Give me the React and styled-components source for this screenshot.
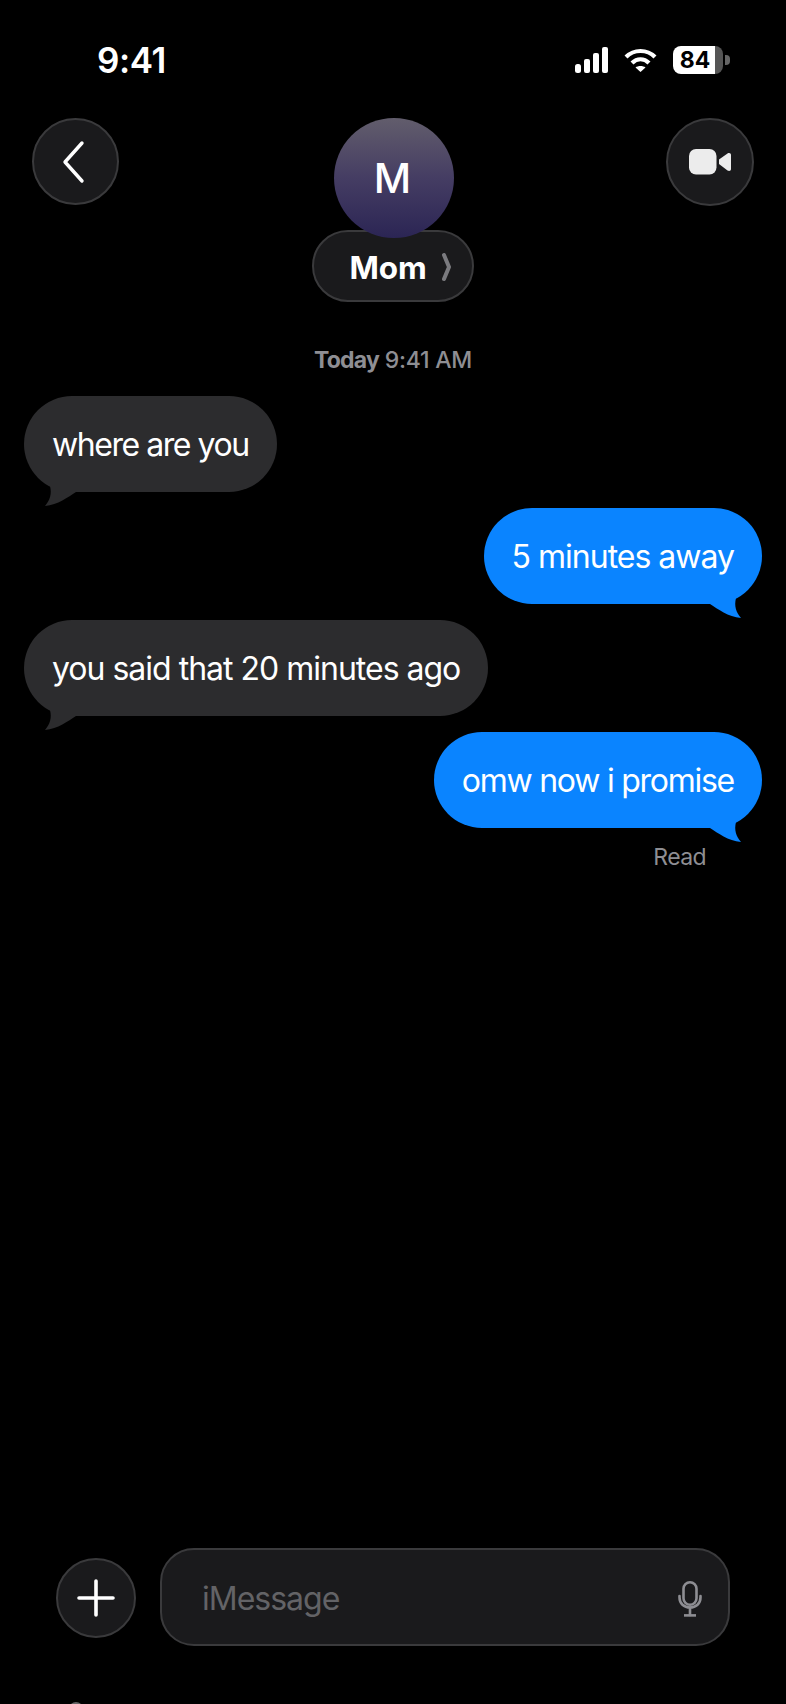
import React from "react";
import styled, { createGlobalStyle } from "styled-components";

const Global = createGlobalStyle`
  html, body { margin: 0; padding: 0; background: #000; }
  * { box-sizing: border-box; }
`;

const Screen = styled.div`
  width: 786px; height: 1704px; background: #000; color: #fff; overflow: hidden;
  display: flex; flex-direction: column;
  font-family: Inter, "Liberation Sans", sans-serif;
`;
const StatusBar = styled.div`
  height: 118px; padding: 41px 56px 0 97px; display: flex; justify-content: space-between; align-items: flex-start;
`;
const Clock = styled.div`
  font-size: 35px; line-height: 38px; font-weight: 600; letter-spacing: -0.4px;
`;
const StatusIcons = styled.div`
  display: flex; align-items: center; gap: 16px; height: 38px;
`;
const BatteryWrap = styled.div`
  display: flex; align-items: center; gap: 2px;
`;
const Battery = styled.div`
  width: 50px; height: 28px; border-radius: 8px; overflow: hidden;
  background: linear-gradient(90deg, #fff 0 42px, #555 42px);
  color: #000; font-size: 23px; font-weight: 700; line-height: 28px; text-align: center; padding-right: 6px;
`;
const BatteryCap = styled.div`
  width: 5px; height: 10px; border-radius: 0 4px 4px 0; background: #666;
`;
const Header = styled.div`
  display: grid; grid-template-columns: 87px 1fr 88px; padding: 0 32px; align-items: start;
`;
const RoundButton = styled.div`
  width: ${p => p.$size || 87}px; height: ${p => p.$size || 87}px; border-radius: 50%;
  margin-top: ${p => p.$nudge || 0}px;
  background: #1a1a1c; border: 2px solid #3a3a3c; display: flex; align-items: center; justify-content: center; flex: none;
`;
const BackChevron = styled.svg`
  margin-right: 4px;
`;
const Contact = styled.div`
  display: flex; flex-direction: column; align-items: center;
`;
const Avatar = styled.div`
  width: 120px; height: 120px; border-radius: 50%; margin: 0 0 -8px 2px; position: relative; z-index: 1;
  background: linear-gradient(180deg, #625d6c 0%, #453d63 50%, #2b2554 100%);
  display: flex; align-items: center; justify-content: center; font-size: 41px; font-weight: 500; padding-right: 2px;
`;
const NamePill = styled.div`
  width: 162px; height: 72px; border-radius: 36px; background: #1a1a1c; border: 2px solid #3a3a3c;
  display: flex; align-items: center; justify-content: center; gap: 15px; padding: 2px 0 0 15px;
  font-size: 31.5px; font-weight: 700; letter-spacing: -0.1px;
`;
const Thread = styled.div`
  display: flex; flex-direction: column; padding: 42px 24px 0; flex: 1;
`;
const Stamp = styled.div`
  text-align: center; font-size: 23px; line-height: 32px; color: #8e8e93; margin-bottom: 20px;
  font-weight: 500; letter-spacing: -0.25px;
  b { font-weight: 700; letter-spacing: -0.8px; }
`;
const Row = styled.div`
  display: flex; margin-bottom: 16px; justify-content: ${p => (p.$me ? "flex-end" : "flex-start")};
`;
const Bubble = styled.div`
  position: relative; height: 96px; border-radius: 48px; padding: 1px 28px 0; display: flex; align-items: center;
  font-size: 32px; letter-spacing: ${p => p.$track}px; color: #fff; background: ${p => (p.$me ? "#0a84ff" : "#2c2c2e")};
`;
const Tail = styled.svg`
  position: absolute; bottom: -14px; width: 34px; height: 24px;
  ${p => (p.$me ? "right: 20px; transform: scaleX(-1);" : "left: 20px;")}
`;
const Receipt = styled.div`
  text-align: right; font-size: 23px; line-height: 30px; color: #8e8e93; margin: -2px 56px 0 0; letter-spacing: -0.6px;
`;
const Composer = styled.div`
  display: flex; align-items: center; gap: 24px; padding: 0 56px;
`;
const Field = styled.div`
  flex: 1; height: 98px; border-radius: 34px; background: #1a1a1c; border: 2px solid #3a3a3c;
  display: flex; align-items: center; justify-content: space-between; padding: 3px 26px 0 40px;
  font-size: 32px; color: #636366; letter-spacing: -1px;
`;
const Tray = styled.div`
  height: 58px; padding: 56px 0 0 66px; overflow: hidden;
`;
const TrayIcon = styled.div`
  width: 20px; height: 30px; border-radius: 50%; background: #666;
`;

const Msg = ({ me, track, children }) => (
  <Row $me={me}>
    <Bubble $me={me} $track={track}>
      {children}
      <Tail $me={me} viewBox="0 0 34 24" aria-hidden="true">
        <path d="M6 4 C8 12 6 18 1 24 C14 23 24 15 32 10 L32 0 L6 0 Z" fill={me ? "#0a84ff" : "#2c2c2e"} />
      </Tail>
    </Bubble>
  </Row>
);

export default function App() {
  return (
    <Screen>
      <Global />
      <StatusBar>
        <Clock>9:41</Clock>
        <StatusIcons>
          <svg width="33" height="26" viewBox="0 0 33 26" fill="#fff">
            <rect x="0" y="17" width="6" height="9" rx="2.5" />
            <rect x="9" y="12" width="6" height="14" rx="2" />
            <rect x="18" y="6" width="6" height="20" rx="2" />
            <rect x="27" y="0" width="6" height="26" rx="2" />
          </svg>
          <svg width="33" height="26" viewBox="0 0 33 26" fill="none" stroke="#fff" strokeWidth="4.2">
            <path d="M2 10 C10 2 23 2 31 10" />
            <path d="M8 16 C13 11 20 11 25 16" />
            <path d="M16.5 25 L11.5 20.5 C14 18.5 19 18.5 21.5 20.5 Z" fill="#fff" stroke="none" />
          </svg>
          <BatteryWrap>
            <Battery>84</Battery>
            <BatteryCap />
          </BatteryWrap>
        </StatusIcons>
      </StatusBar>
      <Header>
        <RoundButton>
          <BackChevron width="24" height="44" viewBox="0 0 24 44" fill="none" stroke="#fff" strokeWidth="3.4" strokeLinecap="round" strokeLinejoin="round">
            <path d="M20 3 L3 22 L20 41" />
          </BackChevron>
        </RoundButton>
        <Contact>
          <Avatar>M</Avatar>
          <NamePill>
            Mom
            <svg width="9" height="28" viewBox="0 0 9 28" fill="none" stroke="#7a7a7e" strokeWidth="4" strokeLinecap="round" strokeLinejoin="round">
              <path d="M2 2 L7 14 L2 26" />
            </svg>
          </NamePill>
        </Contact>
        <RoundButton $size={88}>
          <svg width="42" height="26" viewBox="0 0 42 26" fill="#ececec">
            <rect x="0" y="0" width="27.5" height="25.5" rx="7" />
            <path d="M30 10.5 L38.5 4.5 C40.5 3.4 42 4.5 42 6 L42 20 C42 21.5 40.5 22.6 38.5 21.5 L30 15 Z" />
          </svg>
        </RoundButton>
      </Header>
      <Thread>
        <Stamp><b>Today</b> 9:41 AM</Stamp>
        <Msg track={-1.45}>where are you</Msg>
        <Msg me track={-1}>5 minutes away</Msg>
        <Msg track={-1}>you said that 20 minutes ago</Msg>
        <Msg me track={-1.25}>omw now i promise</Msg>
        <Receipt>Read</Receipt>
      </Thread>
      <Composer>
        <RoundButton $size={80} $nudge={2}>
          <svg width="38" height="38" viewBox="0 0 38 38" stroke="#fff" strokeWidth="3.6" strokeLinecap="round">
            <path d="M19 2 V36 M2 19 H36" />
          </svg>
        </RoundButton>
        <Field>
          iMessage
          <svg width="24" height="36" viewBox="0 0 24 36" fill="none" stroke="#8e8e93" strokeWidth="2.6" strokeLinecap="round">
            <rect x="5.5" y="1.3" width="13" height="22.5" rx="6.5" />
            <path d="M1.5 15 V16.5 C1.5 22.5 6 26.5 12 26.5 C18 26.5 22.5 22.5 22.5 16.5 V15" />
            <path d="M12 26.5 V34" />
            <path d="M6 34.4 H18" strokeLinecap="butt" />
          </svg>
        </Field>
      </Composer>
      <Tray><TrayIcon /></Tray>
    </Screen>
  );
}
